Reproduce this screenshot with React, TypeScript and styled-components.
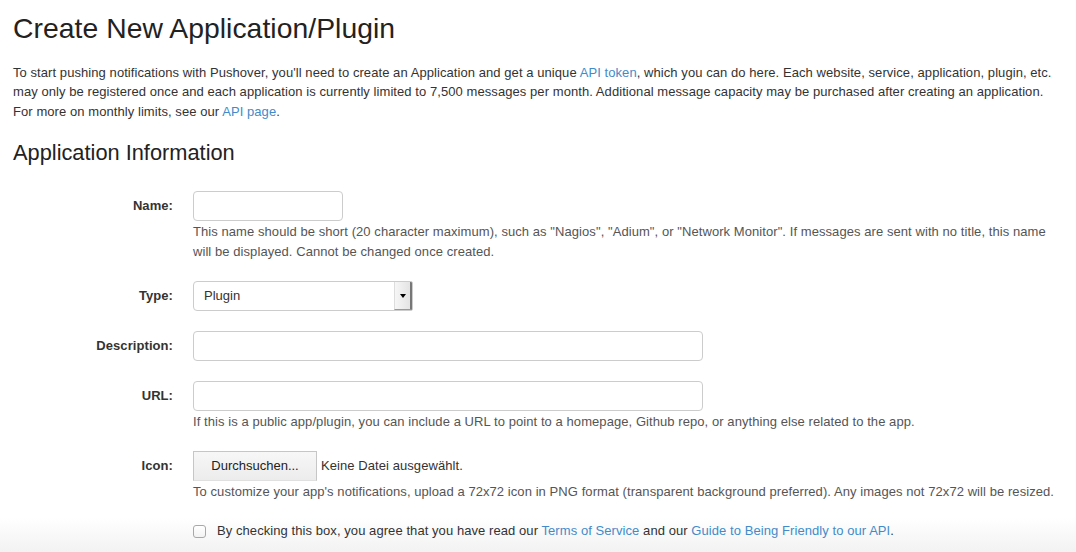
import React from "react";
import styled, { createGlobalStyle } from "styled-components";

const Global = createGlobalStyle`
  html, body { margin: 0; padding: 0; height: 100%; }
  html {
    background: linear-gradient(to bottom, #ffffff 0, #ffffff calc(100% - 34px), #f2f2f2 100%);
  }
  body {
    font-family: "Liberation Sans", Arial, Helvetica, sans-serif;
    font-size: 13px;
    letter-spacing: 0.07px;
    color: #333;
    background: transparent;
  }
`;

const Page = styled.div`
  padding: 13px 13px 0 13px;
`;

const Title = styled.h1`
  margin: 0;
  font-size: 28.3px;
  font-weight: 400;
  letter-spacing: 0.05px;
  line-height: 31px;
  color: #222;
`;

const Intro = styled.p`
  margin: 18.5px 0 0 0;
  line-height: 19.5px;
  color: #333;
`;

const Link = styled.a`
  color: #428bca;
  text-decoration: none;
`;

const SectionTitle = styled.h3`
  margin: 20px 0 0 0;
  font-size: 21.8px;
  font-weight: 400;
  letter-spacing: 0;
  line-height: 24px;
  color: #222;
`;

const Form = styled.form`
  margin-top: 26px;
  display: flex;
  flex-direction: column;
  gap: 20px;
`;

const Row = styled.div`
  display: grid;
  grid-template-columns: 160px 1fr;
  column-gap: 20px;
  line-height: 20px;
`;

const Label = styled.label`
  text-align: right;
  font-weight: 700;
  line-height: 30px;
  color: #333;
`;

const Field = styled.div`
  display: flex;
  flex-direction: column;
  align-items: flex-start;
`;

const TextInput = styled.input<{ $w: number }>`
  box-sizing: border-box;
  width: ${(p) => p.$w}px;
  height: 30px;
  border: 1px solid #ccc;
  border-radius: 4px;
  padding: 0 10px;
  font: inherit;
  background: #fff;
  outline: none;
`;

const Help = styled.div`
  color: #555;
  line-height: 20px;
  padding-top: 1px;
  margin-bottom: -1px;
`;

const SelectBox = styled.div`
  box-sizing: border-box;
  width: 220px;
  height: 30px;
  display: flex;
  border: 1px solid #ccc;
  border-radius: 4px 2px 2px 4px;
  overflow: hidden;
  background: #fff;
`;

const SelectNative = styled.select`
  flex: 1;
  appearance: none;
  -webkit-appearance: none;
  border: none;
  background: transparent;
  font: inherit;
  color: #333;
  padding: 0 10px;
  outline: none;
`;

const SelectArrow = styled.span`
  width: 15px;
  display: flex;
  align-items: center;
  justify-content: center;
  background: linear-gradient(to right, #f6f6f6, #e4e4e4);
  border-left: 1px solid #ddd;
  border-right: 2px solid #777;
  border-bottom: 1px solid #999;
  &::after {
    content: "";
    width: 0;
    height: 0;
    border-left: 3px solid transparent;
    border-right: 3px solid transparent;
    border-top: 4px solid #000;
  }
`;

const FileLine = styled.div`
  display: flex;
  align-items: center;
  gap: 4px;
  height: 30px;
`;

const FileButton = styled.button`
  box-sizing: border-box;
  width: 124px;
  height: 30px;
  border: 1px solid #c6c6c6;
  border-bottom-color: #e0e0e0;
  background: linear-gradient(to bottom, #f7f7f7, #ececec);
  font: inherit;
  color: #222;
  padding: 0;
`;

const FileText = styled.span`
  color: #333;
`;

const CheckLine = styled.label`
  display: flex;
  align-items: center;
  gap: 11px;
  line-height: 20px;
  color: #333;
`;

const Check = styled.span`
  box-sizing: border-box;
  width: 13px;
  height: 13px;
  flex: none;
  border: 1px solid #a8a8a8;
  border-radius: 3px;
  background: linear-gradient(to bottom, #ffffff, #f3f3f3);
`;

export default function App() {
  return (
    <>
      <Global />
      <Page>
        <Title>Create New Application/Plugin</Title>
        <Intro>
          To start pushing notifications with Pushover, you'll need to create an Application and get a unique{" "}
          <Link href="#">API token</Link>, which you can do here. Each website, service, application, plugin, etc.
          may only be registered once and each application is currently limited to 7,500 messages per month.
          Additional message capacity may be purchased after creating an application.
          <br />
          For more on monthly limits, see our <Link href="#">API page</Link>.
        </Intro>
        <SectionTitle>Application Information</SectionTitle>
        <Form onSubmit={(e) => e.preventDefault()}>
          <Row>
            <Label>Name:</Label>
            <Field>
              <TextInput $w={150} />
              <Help>
                This name should be short (20 character maximum), such as "Nagios", "Adium", or "Network Monitor". If
                messages are sent with no title, this name will be displayed. Cannot be changed once created.
              </Help>
            </Field>
          </Row>
          <Row>
            <Label>Type:</Label>
            <Field>
              <SelectBox>
                <SelectNative defaultValue="plugin">
                  <option value="plugin">Plugin</option>
                  <option value="application">Application</option>
                </SelectNative>
                <SelectArrow />
              </SelectBox>
            </Field>
          </Row>
          <Row>
            <Label>Description:</Label>
            <Field>
              <TextInput $w={510} />
            </Field>
          </Row>
          <Row>
            <Label>URL:</Label>
            <Field>
              <TextInput $w={510} />
              <Help>
                If this is a public app/plugin, you can include a URL to point to a homepage, Github repo, or anything
                else related to the app.
              </Help>
            </Field>
          </Row>
          <Row>
            <Label>Icon:</Label>
            <Field>
              <FileLine>
                <FileButton type="button">Durchsuchen...</FileButton>
                <FileText>Keine Datei ausgewählt.</FileText>
              </FileLine>
              <Help>
                To customize your app's notifications, upload a 72x72 icon in PNG format (transparent background
                preferred). Any images not 72x72 will be resized.
              </Help>
            </Field>
          </Row>
          <Row>
            <span />
            <CheckLine>
              <Check />
              <span>
                By checking this box, you agree that you have read our <Link href="#">Terms of Service</Link> and our{" "}
                <Link href="#">Guide to Being Friendly to our API</Link>.
              </span>
            </CheckLine>
          </Row>
        </Form>
      </Page>
    </>
  );
}
